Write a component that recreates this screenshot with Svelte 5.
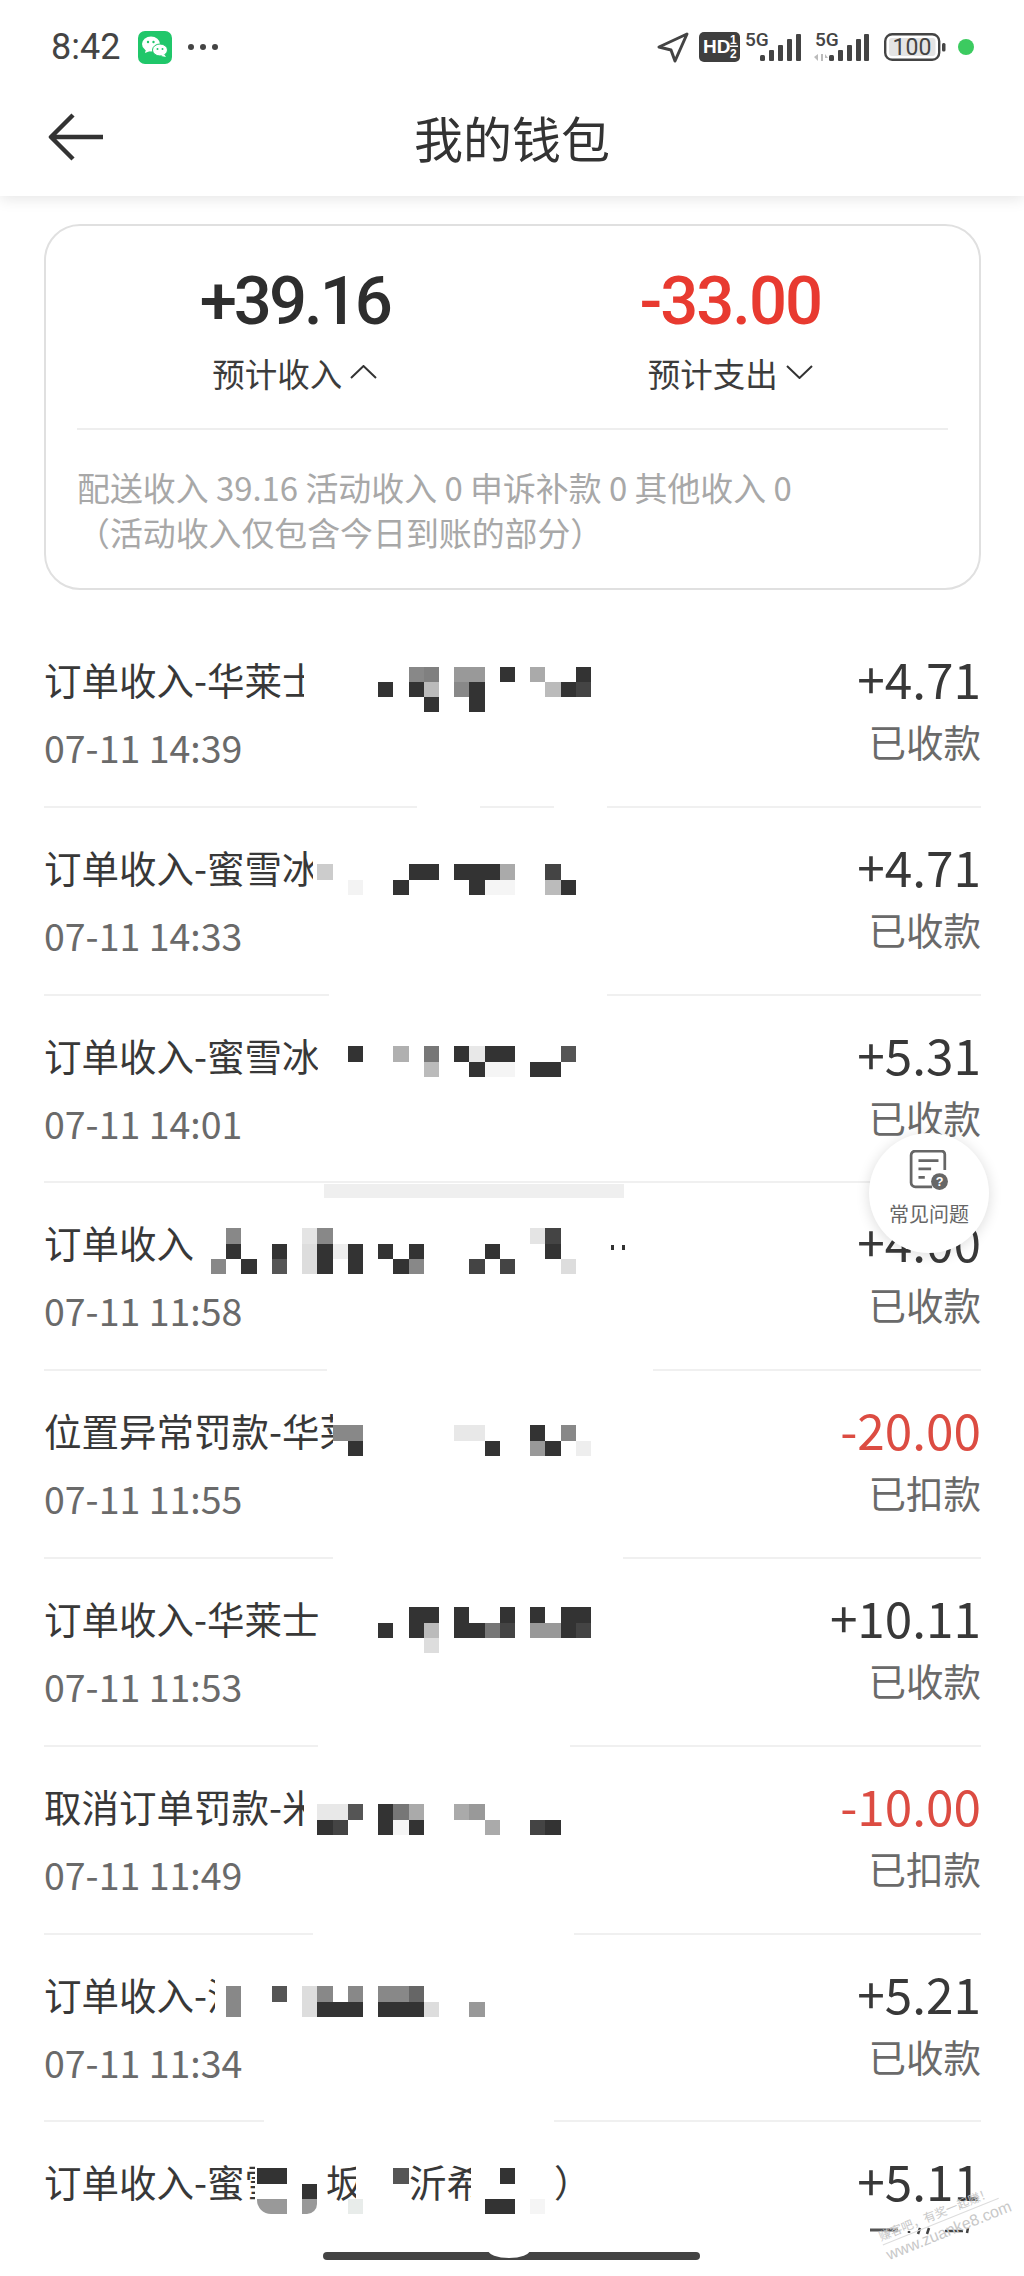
<script>
  const CELL = 15.2;

  // mosaic: [row, col, colour, corner], col counted from x=212 on the page
  const rows = [
    {
      title: '订单收入-华莱士', clip: 260, date: '07-11 14:39', amount: '+4.71', status: '已收款', top: 46.5,
      gaps: [[373, 63], [510, 53]],
      cells: [[0,13,'#888'],[0,14,'#808080'],[0,16,'#999'],[0,17,'#999'],[0,19,'#333'],[0,21,'#aaa'],[0,24,'#333'],
        [1,11,'#333'],[1,13,'#333'],[1,14,'#bbb'],[1,16,'#888'],[1,17,'#333'],[1,22,'#bbb'],[1,23,'#333'],[1,24,'#444'],
        [2,14,'#333'],[2,17,'#333']]
    },
    {
      title: '订单收入-蜜雪冰', clip: 269, date: '07-11 14:33', amount: '+4.71', status: '已收款', top: 56.7,
      gaps: [[285, 278]],
      cells: [[0,7,'#ccc'],[0,13,'#333'],[0,14,'#333'],[0,16,'#333'],[0,17,'#333'],[0,18,'#333'],[0,19,'#aaa'],[0,22,'#444'],
        [1,9,'#f3f3f3'],[1,12,'#333'],[1,17,'#333'],[1,18,'#f5f5f5'],[1,19,'#f5f5f5'],[1,22,'#bbb'],[1,23,'#333']]
    },
    {
      title: '订单收入-蜜雪冰', clip: 274, date: '07-11 14:01', amount: '+5.31', status: '已收款', top: 50.9,
      cells: [[0,9,'#333'],[0,12,'#b0b0b0'],[0,14,'#777'],[0,16,'#333'],[0,17,'#e8e8e8'],[0,18,'#333'],[0,19,'#333'],[0,23,'#555'],
        [1,14,'#bbb'],[1,17,'#333'],[1,18,'#f5f5f5'],[1,19,'#f5f5f5'],[1,21,'#333'],[1,22,'#333']]
    },
    {
      title: '订单收入（', clip: 151, date: '07-11 11:58', amount: '+4.00', status: '已收款', top: 45,
      gaps: [[283, 326]],
      cells: [[0,1,'#888'],[0,6,'#e4e4e4'],[0,7,'#888'],[0,21,'#e4e4e4'],[0,22,'#444'],
        [1,1,'#333'],[1,4,'#333'],[1,6,'#ddd'],[1,7,'#333'],[1,8,'#eee'],[1,9,'#333'],[1,11,'#333'],[1,13,'#333'],[1,18,'#333'],[1,22,'#333'],
        [2,0,'#888'],[2,2,'#333'],[2,4,'#555'],[2,6,'#ddd'],[2,7,'#333'],[2,9,'#333'],[2,12,'#333'],[2,13,'#888'],[2,17,'#444'],[2,19,'#444'],[2,23,'#ddd']],
      specks: [[567, 62], [578, 62]]
    },
    {
      title: '位置异常罚款-华莱', clip: 289, date: '07-11 11:55', amount: '-20.00', status: '已扣款', top: 54.3, red: true,
      gaps: [[289, 290]],
      cells: [[0,8,'#888'],[0,9,'#888'],[0,16,'#e8e8e8'],[0,17,'#e8e8e8'],[0,21,'#333'],[0,23,'#888'],
        [1,9,'#333'],[1,18,'#333'],[1,21,'#999'],[1,22,'#333'],[1,24,'#eee']]
    },
    {
      title: '订单收入-华莱士', date: '07-11 11:53', amount: '+10.11', status: '已收款', top: 48.5,
      gaps: [[274, 252]],
      cells: [[0,13,'#333'],[0,14,'#333'],[0,16,'#333'],[0,19,'#333'],[0,21,'#333'],[0,23,'#333'],[0,24,'#333'],
        [1,11,'#333'],[1,13,'#333'],[1,14,'#bbb'],[1,16,'#333'],[1,17,'#333'],[1,18,'#777'],[1,19,'#444'],[1,21,'#999'],[1,22,'#999'],[1,23,'#333'],[1,24,'#444'],
        [2,14,'#ddd']]
    },
    {
      title: '取消订单罚款-米', clip: 260, date: '07-11 11:49', amount: '-10.00', status: '已扣款', top: 57.7, red: true,
      gaps: [[269, 261]],
      cells: [[0,7,'#e8e8e8'],[0,8,'#e8e8e8'],[0,9,'#555'],[0,11,'#333'],[0,12,'#777'],[0,13,'#aaa'],[0,16,'#aaa'],[0,17,'#999'],
        [1,7,'#333'],[1,8,'#444'],[1,11,'#333'],[1,12,'#f5f5f5'],[1,13,'#333'],[1,18,'#aaa'],[1,21,'#444'],[1,22,'#333']]
    },
    {
      title: '订单收入-汉', clip: 171, date: '07-11 11:34', amount: '+5.21', status: '已收款', top: 51.9,
      gaps: [[220, 290]],
      cells: [[0,1,'#888'],[0,4,'#555'],[0,6,'#ddd'],[0,7,'#888'],[0,9,'#888'],[0,11,'#888'],[0,12,'#888'],[0,13,'#666'],
        [1,1,'#888'],[1,6,'#ddd'],[1,7,'#333'],[1,8,'#333'],[1,9,'#333'],[1,11,'#333'],[1,12,'#333'],[1,13,'#333'],[1,14,'#ddd'],[1,17,'#999']]
    },
    {
      title: '订单收入-蜜雪', clip: 211, date: '', amount: '+5.11', status: '', top: 46.1, last: true,
      cells: [[0,3,'#333'],[0,4,'#333'],[0,12,'#555'],[0,19,'#333'],
        [1,6,'#333'],
        [2,3,'#999','0 0 0 14px'],[2,4,'#999'],[2,6,'#999','0 0 10px 0'],[2,9,'#e8ecea'],[2,18,'#333'],[2,19,'#333'],[2,21,'#f5f5f5']],
      pieces: [[282, 30, '坂'], [365, 62, '沂希'], [510, 20, '）']]
    }
  ];
</script>

<div class="page">
  <header class="head">
    <div class="status">
      <span class="time">8:42</span>
      <svg class="wechat" width="34" height="33" viewBox="0 0 34 33">
        <rect width="34" height="33" rx="7" fill="#20c76a" />
        <ellipse cx="13" cy="13" rx="9" ry="7.5" fill="#fff" />
        <path d="M8 18l-1 4 5-2z" fill="#fff" />
        <ellipse cx="22" cy="19" rx="7.5" ry="6" fill="#fff" stroke="#20c76a" />
        <path d="M26 23l2 3-5-1z" fill="#fff" />
        <circle cx="10" cy="11" r="1.2" fill="#20c76a" />
        <circle cx="15.5" cy="11" r="1.2" fill="#20c76a" />
        <circle cx="19.5" cy="18" r="1" fill="#20c76a" />
        <circle cx="24.5" cy="18" r="1" fill="#20c76a" />
      </svg>
      <span class="dots"><i></i><i></i><i></i></span>

      <span class="right">
        <svg class="gps" width="33" height="31" viewBox="0 0 33 31">
          <path d="M31 2L3 15l12 3 4 11z" fill="none" stroke="#444" stroke-width="3" stroke-linejoin="round" />
        </svg>
        <svg class="hd" width="41" height="30" viewBox="0 0 41 30">
          <rect width="41" height="30" rx="5" fill="#3f3f3f" />
          <text x="4" y="21" class="hd-t">HD</text>
          <text x="31" y="12" class="hd-s">1</text>
          <text x="31" y="26" class="hd-s">2</text>
          <rect x="31" y="13.5" width="8" height="1.5" fill="#fff" />
        </svg>
        <svg class="sig" width="57" height="30" viewBox="0 0 57 30">
          <text x="0" y="14" class="five">5G</text>
          <rect x="15" y="23" width="5" height="6" rx="1.5" fill="#444" />
          <rect x="24" y="18" width="5" height="11" rx="1" fill="#444" />
          <rect x="33" y="13" width="5" height="16" rx="1" fill="#444" />
          <rect x="42" y="7" width="5" height="22" rx="1" fill="#444" />
          <rect x="51" y="2" width="5" height="27" rx="1" fill="#444" />
        </svg>
        <svg class="sig two" width="56" height="30" viewBox="0 0 56 30">
          <text x="1" y="14" class="five">5G</text>
          <path d="M0 25l4-3v7zM7 22h2v7H7zM11 22l3 4h-3z" fill="#bbb" />
          <rect x="15" y="23" width="5" height="6" rx="1.5" fill="#444" />
          <rect x="24" y="18" width="5" height="11" rx="1" fill="#444" />
          <rect x="33" y="13" width="5" height="16" rx="1" fill="#444" />
          <rect x="42" y="7" width="5" height="22" rx="1" fill="#444" />
          <rect x="50" y="2" width="5" height="27" rx="1" fill="#444" />
        </svg>
        <svg class="batt" width="62" height="28" viewBox="0 0 62 28">
          <rect x="1.2" y="1.2" width="54" height="25.6" rx="7" fill="#fff" stroke="#444" stroke-width="2.4" />
          <rect x="5" y="5" width="46.5" height="18" rx="3" fill="#e4e4e4" />
          <text x="28" y="22" class="pct">100</text>
          <rect x="58" y="10" width="3.5" height="8.5" rx="1.5" fill="#444" />
        </svg>
        <span class="live"></span>
      </span>
    </div>
    <div class="nav">
      <svg class="back" width="56" height="48" viewBox="0 0 56 48">
        <path d="M55 24H3M25 2L3 24l22 22" fill="none" stroke="#333" stroke-width="4.5" stroke-linejoin="round" />
      </svg>
      <h1>我的钱包</h1>
    </div>
  </header>

  <section class="card">
    <div class="stats">
      <div class="stat">
        <div class="big">+39.16</div>
        <div class="label">
          预计收入
          <svg width="27" height="14" viewBox="0 0 27 14"><path d="M1 13L13.5 1 26 13" fill="none" stroke="#333" stroke-width="2" /></svg>
        </div>
      </div>
      <div class="stat">
        <div class="big red">-33.00</div>
        <div class="label">
          预计支出
          <svg width="27" height="14" viewBox="0 0 27 14"><path d="M1 1l12.5 12L26 1" fill="none" stroke="#333" stroke-width="2" /></svg>
        </div>
      </div>
    </div>
    <div class="note">
      <p>配送收入 39.16 活动收入 0 申诉补款 0 其他收入 0</p>
      <p>（活动收入仅包含今日到账的部分）</p>
    </div>
  </section>

  <ul class="list">
    {#each rows as row}
      <li class="row" class:last={row.last}>
        <div class="left">
          <div class="title" style={row.clip ? `width:${row.clip}px` : ''}>{row.title}</div>
          <div class="date">{row.date}</div>
        </div>
        <div class="money">
          <div class="amount" class:minus={row.red}>{row.amount}</div>
          {#if row.status}
            <div class="state">{row.status}</div>
          {:else}
            <svg class="scraps" width="112" height="46" viewBox="0 0 112 46">
              <path d="M1 10h28" stroke="#555" stroke-width="3" />
              <path d="M40 11v2M51 8l-2 6M60 8l-2 6M76 11h18M99 8l-1 5" stroke="#444" stroke-width="2.5" />
            </svg>
          {/if}
        </div>

        {#if row.pieces}
          {#each row.pieces as piece}
            <span class="piece" style="left:{piece[0]}px;width:{piece[1]}px">{piece[2]}</span>
          {/each}
        {/if}
        {#each row.cells as cell}
          <i class="cell" style="left:{167 + cell[1] * CELL}px;top:{row.top + cell[0] * CELL}px;background:{cell[2]};border-radius:{cell[3] || 0}"></i>
        {/each}
        {#if row.specks}
          {#each row.specks as s}
            <i class="speck" style="left:{s[0]}px;top:{s[1]}px"></i>
          {/each}
        {/if}
        {#if row.gaps}
          {#each row.gaps as gap}
            <i class="gap" style="left:{gap[0]}px;width:{gap[1]}px"></i>
          {/each}
        {/if}
      </li>
    {/each}
  </ul>

  <div class="strip"></div>

  <button class="fab">
    <svg width="40" height="40" viewBox="0 0 38 38">
      <path d="M22 35H6a4 4 0 0 1-4-4V5a4 4 0 0 1 4-4h25a3 3 0 0 1 3 3v15" fill="none" stroke="#666" stroke-width="2.6" />
      <path d="M9 10h19M9 18h12M9 26h6" stroke="#666" stroke-width="2.6" />
      <circle cx="29" cy="30" r="8" fill="#666" />
      <text x="29" y="34.5" class="q">?</text>
    </svg>
    <span>常见问题</span>
  </button>

  <div class="watermark">
    <span class="wm-a">赚客吧，有奖一起赚！</span>
    <span class="wm-b">www.zuanke8.com</span>
  </div>

  <div class="home"></div>
</div>

<style>
  :global(body) {
    margin: 0;
    background: #fff;
  }
  .page {
    position: relative;
    width: 1024px;
    height: 2276px;
    overflow: hidden;
    background: #fff;
    color: #333;
    font-family: "Noto Sans CJK SC", "Noto Sans", sans-serif;
  }

  /* header */
  .head {
    position: relative;
    height: 196px;
    background: #fff;
    box-shadow: 0 3px 14px rgba(0, 0, 0, 0.1);
    z-index: 2;
  }
  .status {
    display: flex;
    align-items: center;
    height: 94px;
    padding: 0 50px 0 51px;
  }
  .time {
    font-family: Roboto, sans-serif;
    font-size: 36px;
    color: #444;
    line-height: 1;
  }
  .wechat {
    margin-left: 18px;
  }
  .dots {
    display: flex;
    gap: 6px;
    margin-left: 16px;
  }
  .dots i {
    width: 6px;
    height: 6px;
    border-radius: 50%;
    background: #444;
  }
  .right {
    display: flex;
    align-items: center;
    margin-left: auto;
  }
  .hd {
    margin-left: 10px;
  }
  .sig {
    margin-left: 5px;
  }
  .sig.two {
    margin-left: 12px;
  }
  .batt {
    margin-left: 14px;
  }
  .hd-t {
    font: 700 19px "Liberation Sans", sans-serif;
    fill: #fff;
  }
  .hd-s {
    font: 700 12px "Liberation Sans", sans-serif;
    fill: #fff;
  }
  .five {
    font: 500 19px Roboto, sans-serif;
    fill: #444;
  }
  .pct {
    font: 400 23px Roboto, sans-serif;
    fill: #444;
    text-anchor: middle;
  }
  .live {
    width: 16px;
    height: 16px;
    margin-left: 12px;
    border-radius: 50%;
    background: #3ccb60;
  }
  .nav {
    position: relative;
    height: 102px;
    display: flex;
    align-items: center;
    justify-content: center;
  }
  .back {
    position: absolute;
    left: 48px;
    top: 19px;
  }
  h1 {
    margin: 0;
    font-size: 49px;
    font-weight: 400;
    line-height: 1;
    transform: translateY(-9px);
  }

  /* summary card */
  .card {
    box-sizing: border-box;
    width: 937px;
    height: 366px;
    margin: 28px 0 0 44px;
    padding: 0 31px;
    border: 2px solid #e0e0e0;
    border-radius: 36px;
  }
  .stats {
    display: grid;
    grid-template-columns: 1fr 1fr;
    padding-bottom: 33px;
    border-bottom: 2px solid #eee;
  }
  .stat {
    display: flex;
    flex-direction: column;
    align-items: center;
    padding-top: 39px;
  }
  .big {
    font-family: Roboto, sans-serif;
    font-size: 67px;
    font-weight: 500;
    line-height: 70px;
    letter-spacing: -3px;
    color: #2e2e2e;
    transform: translateY(1px);
  }
  .big.red {
    letter-spacing: -2px;
    color: #e83a30;
  }
  .label {
    display: flex;
    align-items: center;
    gap: 8px;
    margin-top: 16px;
    font-size: 32.5px;
    line-height: 44px;
    color: #3c3c3c;
  }
  .label svg {
    margin-top: -2px;
  }
  .note {
    padding-top: 34px;
    font-size: 32.9px;
    line-height: 45px;
    color: #a8a8a8;
  }
  .note p {
    margin: 0;
  }

  /* bill list */
  .list {
    list-style: none;
    margin: 30px 43px 0 44px;
    padding: 0;
  }
  .row {
    position: relative;
    box-sizing: border-box;
    height: 187.8px;
    display: flex;
    justify-content: space-between;
    border-bottom: 2px solid #f0f0f0;
  }
  .row.last {
    border-bottom: 0;
  }
  .left {
    padding-top: 34px;
  }
  .title {
    overflow: hidden;
    white-space: nowrap;
    font-size: 37.5px;
    line-height: 50px;
    color: #383838;
  }
  .date {
    margin-top: 20px;
    font-size: 37.5px;
    line-height: 46px;
    color: #6a6a6a;
  }
  .money {
    display: flex;
    flex-direction: column;
    align-items: flex-end;
    padding-top: 31px;
  }
  .amount {
    font-size: 49.5px;
    line-height: 54px;
    color: #383838;
  }
  .amount.minus {
    color: #dc4c42;
  }
  .state {
    margin-top: 13px;
    font-size: 37.5px;
    line-height: 46px;
    color: #6a6a6a;
  }
  .scraps {
    margin-top: 13px;
  }
  .piece {
    position: absolute;
    top: 34px;
    overflow: hidden;
    white-space: nowrap;
    font-size: 37.5px;
    line-height: 50px;
    color: #383838;
  }
  .cell {
    position: absolute;
    width: 15.2px;
    height: 15.2px;
  }
  .speck {
    position: absolute;
    width: 3px;
    height: 5px;
    background: #333;
  }
  .gap {
    position: absolute;
    bottom: -3px;
    height: 4px;
    background: #fff;
  }

  .strip {
    position: absolute;
    left: 324px;
    top: 1184px;
    width: 300px;
    height: 14px;
    background: #efefef;
  }

  /* floating help button */
  .fab {
    position: absolute;
    left: 869px;
    top: 1133px;
    width: 120px;
    height: 120px;
    display: flex;
    flex-direction: column;
    align-items: center;
    padding: 17px 0 0;
    border: 0;
    border-radius: 50%;
    background: #fff;
    box-shadow: 0 2px 14px rgba(0, 0, 0, 0.14);
    font-family: inherit;
  }
  .fab span {
    margin-top: 11px;
    font-size: 20px;
    line-height: 26px;
    color: #666;
  }
  .q {
    font: 700 12px "Liberation Sans", sans-serif;
    fill: #fff;
    text-anchor: middle;
  }

  .watermark {
    position: absolute;
    left: 879px;
    top: 2203px;
    display: flex;
    flex-direction: column;
    width: 125px;
    transform: rotate(-22deg);
    transform-origin: 50% 50%;
    white-space: nowrap;
    color: #c8c8c8;
  }
  .wm-a {
    font-size: 12px;
    line-height: 18px;
    border-bottom: 1px solid #ddd;
  }
  .wm-b {
    font-family: "Liberation Sans", sans-serif;
    font-size: 16px;
    line-height: 22px;
  }

  .home {
    position: absolute;
    left: 323px;
    top: 2252px;
    width: 377px;
    height: 8px;
    border-radius: 4px;
    background: #444;
    overflow: hidden;
  }
  .home::after {
    content: "";
    position: absolute;
    left: 165px;
    top: -10px;
    width: 42px;
    height: 16px;
    border-radius: 50%;
    background: #fff;
  }
</style>
